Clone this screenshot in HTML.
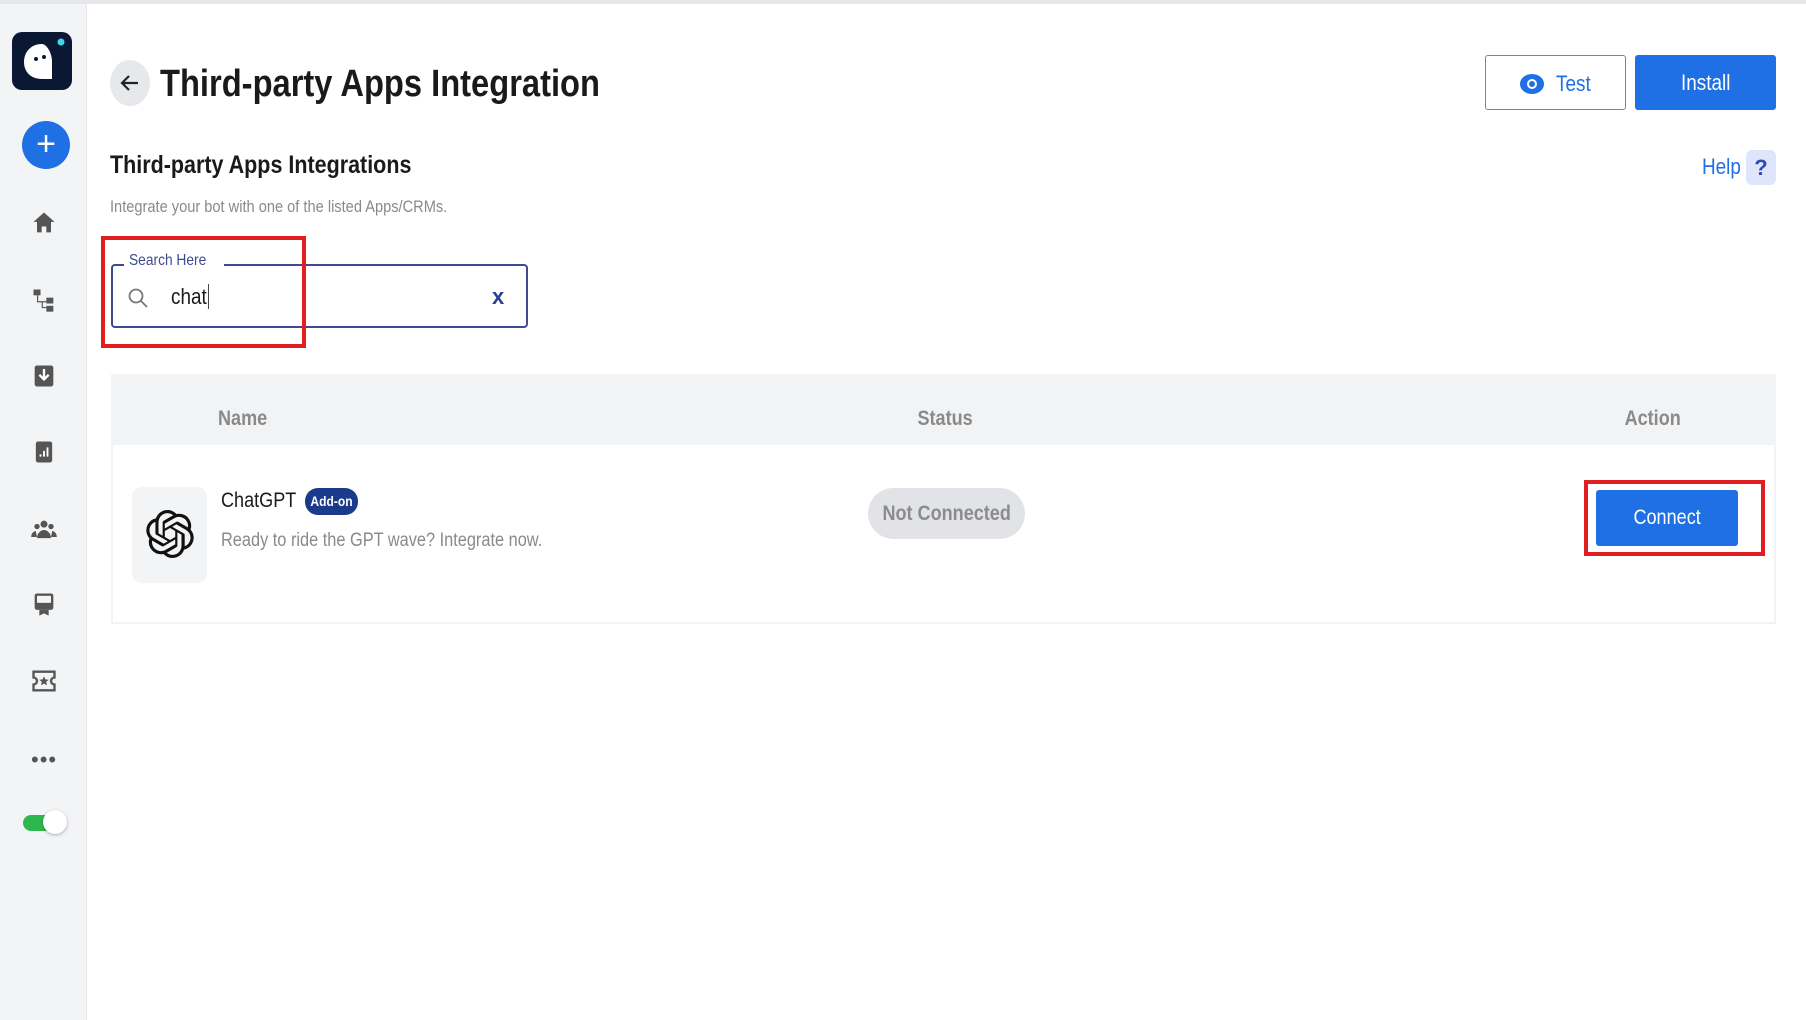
<!DOCTYPE html>
<html><head><meta charset="utf-8"><style>
*{margin:0;padding:0;box-sizing:border-box}
body{width:1806px;height:1020px;background:#fff;font-family:"Liberation Sans",sans-serif;position:relative;overflow:hidden}
.a{position:absolute}
.n{display:inline-block;transform:scaleX(.86);transform-origin:left center;white-space:nowrap}
.c{display:inline-block;transform:scaleX(.86);transform-origin:center;white-space:nowrap}
.ic{position:absolute;left:30px;width:28px;height:28px}
</style></head><body>
<div class="a" style="left:0;top:0;width:1806px;height:4px;background:#e6e7ea"></div>
<div class="a" style="left:0;top:4px;width:87px;height:1016px;background:#f3f4f6;border-right:1px solid #e8e9ec"></div>
<div class="a" style="left:12px;top:32px;width:60px;height:58px;background:#0b1833;border-radius:10px"></div>
<svg class="a" style="left:12px;top:32px" width="60" height="58"><path d="M30 12c-11 0-18 8-18 18 0 10 7 17 18 17h10V30c0-10-6-18-10-18z" fill="#fff"/><circle cx="24" cy="27" r="2" fill="#0b1833"/><circle cx="32" cy="25" r="2" fill="#0b1833"/><circle cx="49" cy="10" r="3.5" fill="#3fd6e8"/></svg>
<div class="a" style="left:22px;top:121px;width:48px;height:48px;border-radius:50%;background:#1f6fe5;color:#fff;font-size:34px;line-height:46px;text-align:center">+</div>
<svg class="ic" style="top:209px" viewBox="0 0 24 24"><path d="M12 3 3 11h3v9h4v-5h4v5h4v-9h3z" fill="#555"/></svg>
<svg class="ic" style="top:286px" viewBox="0 0 24 24" fill="#555"><rect x="3" y="3" width="6" height="5"/><rect x="14" y="10" width="6" height="5"/><rect x="14" y="17" width="6" height="5"/><path d="M6 8v6h8v-1H7V8zM10 14v5h4v-1h-3v-4z"/></svg>
<svg class="ic" style="top:362px" viewBox="0 0 24 24"><rect x="4" y="3" width="16" height="18" rx="2" fill="#555"/><path d="M12 6v8m-4-3 4 4 4-4" stroke="#fff" stroke-width="2" fill="none"/></svg>
<svg class="ic" style="top:438px" viewBox="0 0 24 24"><rect x="5" y="3" width="14" height="18" rx="2" fill="#555"/><path d="M9 16v-2M12 16v-5M15 16V8" stroke="#fff" stroke-width="1.6"/></svg>
<svg class="ic" style="top:516px" viewBox="0 0 24 24" fill="#555"><circle cx="12" cy="7" r="3"/><circle cx="6" cy="9" r="2.3"/><circle cx="18" cy="9" r="2.3"/><path d="M6 19c0-4 3-7 6-7s6 3 6 7zM1 18c0-3 2-5 4-5l1 5zM23 18c0-3-2-5-4-5l-1 5z"/></svg>
<svg class="ic" style="top:590px" viewBox="0 0 24 24"><rect x="4" y="3" width="16" height="14" rx="2" fill="#555"/><rect x="6" y="5" width="12" height="6" fill="#f3f4f6"/><path d="M8 17v5l4-2 4 2v-5z" fill="#555"/></svg>
<svg class="ic" style="top:667px" viewBox="0 0 24 24"><path d="M3 4h18v5a3 3 0 0 0 0 6v5H3v-5a3 3 0 0 0 0-6z" fill="none" stroke="#555" stroke-width="2"/><path d="M12 8l1.2 2.6 2.8.3-2.1 1.9.6 2.8-2.5-1.4-2.5 1.4.6-2.8-2.1-1.9 2.8-.3z" fill="#555"/></svg>
<div class="a" style="left:31px;top:755px;font-size:22px;color:#555;letter-spacing:1px;line-height:10px">•••</div>
<div class="a" style="left:23px;top:815px;width:40px;height:16px;border-radius:8px;background:#2db84f"></div>
<div class="a" style="left:43px;top:810px;width:24px;height:24px;border-radius:50%;background:#fff;box-shadow:0 1px 3px rgba(0,0,0,.3)"></div>
<div class="a" style="left:110px;top:60px;width:40px;height:46px;border-radius:50%;background:#e7e8eb"></div>
<svg class="a" style="left:118px;top:71px" width="24" height="24" viewBox="0 0 24 24"><path d="M20 12H5m6-7-7 7 7 7" stroke="#222" stroke-width="2.2" fill="none"/></svg>
<div class="a" style="left:160px;top:63px;font-size:38px;font-weight:bold;color:#1a1a1a"><span class="n">Third-party Apps Integration</span></div>
<div class="a" style="left:1493px;top:55px;width:141px;height:55px;border:1.5px solid #4a90d9;border-radius:3px;color:#1f6fe5;font-size:22px;line-height:55px;left:1485px"><span style="position:absolute;left:34px;top:18px;width:24px;height:20px;border-radius:50%;background:#1f6fe5"></span><span style="position:absolute;left:41px;top:23px;width:10px;height:10px;border-radius:50%;border:2.5px solid #fff"></span><span class="n" style="position:absolute;left:70px">Test</span></div>
<div class="a" style="left:1635px;top:55px;width:141px;height:55px;background:#1f6fe5;border-radius:3px;color:#fff;font-size:22px;line-height:55px;text-align:center"><span class="c">Install</span></div>
<div class="a" style="left:110px;top:151px;font-size:25px;font-weight:bold;color:#1a1a1a"><span class="n">Third-party Apps Integrations</span></div>
<div class="a" style="left:110px;top:197px;font-size:17px;color:#8a8a8a"><span class="n">Integrate your bot with one of the listed Apps/CRMs.</span></div>
<div class="a" style="left:1702px;top:154px;font-size:22px;color:#1f6fe5"><span class="n">Help</span></div>
<div class="a" style="left:1746px;top:150px;width:30px;height:35px;border-radius:6px;background:#dfe6fb;color:#2a4db5;font-size:22px;font-weight:bold;text-align:center;line-height:35px">?</div>
<div class="a" style="left:111px;top:264px;width:417px;height:64px;border:2px solid #3d4b8f;border-radius:4px"></div>
<div class="a" style="left:124px;top:252px;background:#fff;padding:0 5px;font-size:16px;color:#3d4b8f"><span class="n">Search Here</span></div>
<svg class="a" style="left:126px;top:286px" width="24" height="24" viewBox="0 0 24 24"><circle cx="10" cy="10" r="6.5" stroke="#777" stroke-width="1.8" fill="none"/><path d="M15 15l6 6" stroke="#777" stroke-width="1.8"/></svg>
<div class="a" style="left:171px;top:284px;font-size:22px;color:#1a1a1a"><span class="n">chat<span style="border-left:1.5px solid #222;margin-left:1px"></span></span></div>
<div class="a" style="left:492px;top:284px;font-size:22px;font-weight:bold;color:#2b3f8f">x</div>
<div class="a" style="left:101px;top:236px;width:205px;height:112px;border:4px solid #e02020"></div>
<div class="a" style="left:111px;top:374px;width:1665px;height:71px;background:#f2f3f5"></div>
<div class="a" style="left:218px;top:407px;font-size:21px;font-weight:bold;color:#8a8a8a"><span class="n">Name</span></div>
<div class="a" style="left:845px;top:407px;width:200px;text-align:center;font-size:21px;font-weight:bold;color:#8a8a8a"><span class="c">Status</span></div>
<div class="a" style="left:1553px;top:407px;width:200px;text-align:center;font-size:21px;font-weight:bold;color:#8a8a8a"><span class="c">Action</span></div>
<div class="a" style="left:111px;top:445px;width:1665px;height:179px;border:2px solid #f2f3f5;border-top:none"></div>
<div class="a" style="left:132px;top:487px;width:75px;height:96px;border-radius:10px;background:#f3f4f6"></div>
<svg class="a" style="left:146px;top:510px" width="48" height="48" viewBox="0 0 24 24"><path fill="#111" d="M22.28 9.82a5.98 5.98 0 0 0-.52-4.910 6.05 6.05 0 0 0-6.51-2.9A6.07 6.07 0 0 0 4.98 4.18a5.99 5.99 0 0 0-4 2.9 6.05 6.05 0 0 0 .74 7.1 5.98 5.98 0 0 0 .51 4.91 6.05 6.05 0 0 0 6.52 2.9A5.98 5.98 0 0 0 13.26 24a6.06 6.06 0 0 0 5.770-4.21 5.99 5.99 0 0 0 4-2.9 6.06 6.06 0 0 0-.75-7.07zm-9.02 12.61a4.48 4.48 0 0 1-2.88-1.04l.14-.08 4.78-2.76a.8.8 0 0 0 .39-.68v-6.74l2.02 1.17a.07.07 0 0 1 .04.05v5.58a4.5 4.5 0 0 1-4.49 4.5zm-9.66-4.13a4.47 4.470 0 0 1-.53-3.01l.14.09 4.78 2.76a.77.77 0 0 0 .78 0l5.84-3.37v2.33a.08.08 0 0 1-.03.06l-4.83 2.79a4.5 4.5 0 0 1-6.150-1.65zM2.34 7.9a4.49 4.49 0 0 1 2.37-1.97v5.68a.77.77 0 0 0 .39.68l5.81 3.35-2.02 1.17a.08.08 0 0 1-.07 0l-4.830-2.79A4.5 4.5 0 0 1 2.34 7.87zm16.6 3.86-5.83-3.39 2.02-1.16a.08.08 0 0 1 .07 0l4.83 2.79a4.49 4.49 0 0 1-.68 8.1v-5.68a.79.79 0 0 0-.41-.66zm2.01-3.02-.14-.09-4.77-2.78a.78.78 0 0 0-.79 0L9.41 9.23V6.9a.07.07 0 0 1 .03-.06l4.83-2.79a4.5 4.5 0 0 1 6.68 4.66zM8.31 12.86l-2.02-1.16a.08.08 0 0 1-.04-.06V6.07a4.5 4.5 0 0 1 7.38-3.45l-.14.08-4.78 2.76a.8.8 0 0 0-.39.68zm1.1-2.37 2.6-1.5 2.6 1.5v3l-2.6 1.5-2.6-1.5z"/></svg>
<div class="a" style="left:221px;top:489px;font-size:21px;color:#1a1a1a"><span class="n">ChatGPT</span></div>
<div class="a" style="left:305px;top:488px;width:53px;height:27px;border-radius:13px;background:#1b3a8c;color:#fff;font-size:14px;font-weight:bold;line-height:27px;text-align:center"><span class="c">Add-on</span></div>
<div class="a" style="left:221px;top:530px;font-size:19px;color:#8a8a8a"><span class="n">Ready to ride the GPT wave? Integrate now.</span></div>
<div class="a" style="left:868px;top:488px;width:157px;height:51px;border-radius:26px;background:#e2e3e6;color:#8c8c8c;font-size:21px;font-weight:bold;line-height:51px;text-align:center"><span class="c">Not Connected</span></div>
<div class="a" style="left:1596px;top:490px;width:142px;height:56px;border-radius:3px;background:#1f6fe5;color:#fff;font-size:21px;line-height:56px;text-align:center"><span class="c">Connect</span></div>
<div class="a" style="left:1584px;top:480px;width:181px;height:76px;border:4px solid #e02020"></div>
</body></html>
